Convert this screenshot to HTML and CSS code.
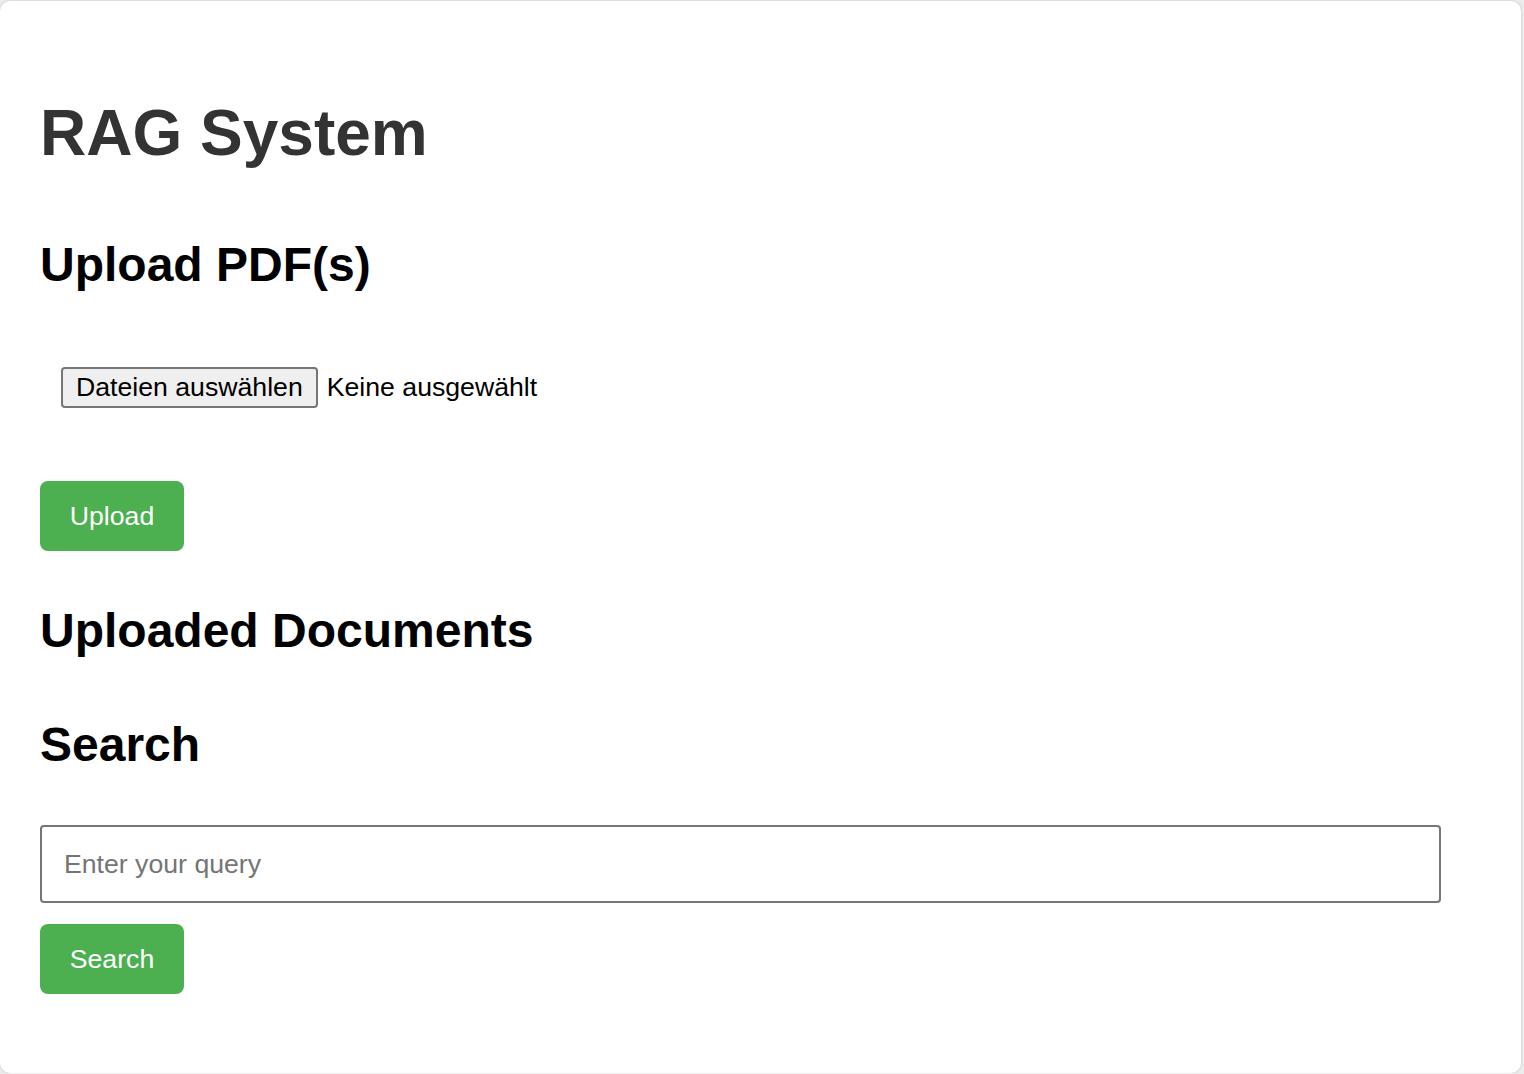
FILE: index.html
```html
<!DOCTYPE html>
<html lang="de">
<head>
<meta charset="utf-8">
<title>RAG System</title>
<link rel="stylesheet" href="styles.css">
</head>
<body>
<div class="container">
  <h1 class="title">RAG System</h1>
  <h2 class="heading h-upload">Upload PDF(s)</h2>
  <div class="file-row">
    <button class="file-btn" type="button">Dateien auswählen</button>
    <span class="file-status">Keine ausgewählt</span>
  </div>
  <button class="btn btn-upload" type="button">Upload</button>
  <h2 class="heading h-docs">Uploaded Documents</h2>
  <h2 class="heading h-search">Search</h2>
  <input class="query" type="text" placeholder="Enter your query">
  <button class="btn btn-search" type="button">Search</button>
</div>
</body>
</html>
```

FILE: styles.css
```css
html, body {
  margin: 0;
  padding: 0;
}
body {
  background: #ececec;
  font-family: "Liberation Sans", Arial, sans-serif;
  overflow: hidden;
}
.container {
  box-sizing: border-box;
  width: 1521px;
  height: 1072px;
  margin: 1px 0 0 0;
  padding: 95px 40px 0 40px;
  background: #ffffff;
  border-radius: 10px;
  box-shadow: 0 0 3px rgba(0, 0, 0, 0.18);
  display: flex;
  flex-direction: column;
  align-items: flex-start;
}
.title {
  margin: 0;
  font-size: 64px;
  line-height: 74px;
  font-weight: bold;
  color: #333333;
}
.heading {
  margin: 0;
  font-size: 48px;
  line-height: 55px;
  font-weight: bold;
  color: #000000;
}
.h-upload { margin-top: 67px; }
.h-docs { margin-top: 52px; }
.h-search { margin-top: 59px; }
.file-row {
  margin-top: 75px;
  padding-left: 21px;
  display: flex;
  align-items: center;
  height: 41px;
}
.file-btn {
  box-sizing: border-box;
  height: 41px;
  padding: 0 13px;
  margin: 0;
  border: 2px solid #767676;
  border-radius: 4px;
  background: #efefef;
  color: #000000;
  font-family: "Liberation Sans", Arial, sans-serif;
  font-size: 26.67px;
  display: inline-flex;
  align-items: center;
}
.file-status {
  margin-left: 9px;
  font-size: 26.67px;
  color: #000000;
}
.btn {
  box-sizing: border-box;
  width: 144px;
  height: 70px;
  padding: 0 30px;
  border: none;
  border-radius: 8px;
  background: #4caf50;
  color: #ffffff;
  font-family: "Liberation Sans", Arial, sans-serif;
  font-size: 26.67px;
  display: inline-flex;
  align-items: center;
  justify-content: center;
}
.btn-upload { margin-top: 73px; }
.btn-search { margin-top: 21px; }
.query {
  box-sizing: border-box;
  margin-top: 53px;
  width: 1401px;
  height: 78px;
  padding: 0 22px;
  border: 2px solid #767676;
  border-radius: 4px;
  font-family: "Liberation Sans", Arial, sans-serif;
  font-size: 26.67px;
  color: #000000;
  outline: none;
}
.query::placeholder {
  color: #757575;
}
```
